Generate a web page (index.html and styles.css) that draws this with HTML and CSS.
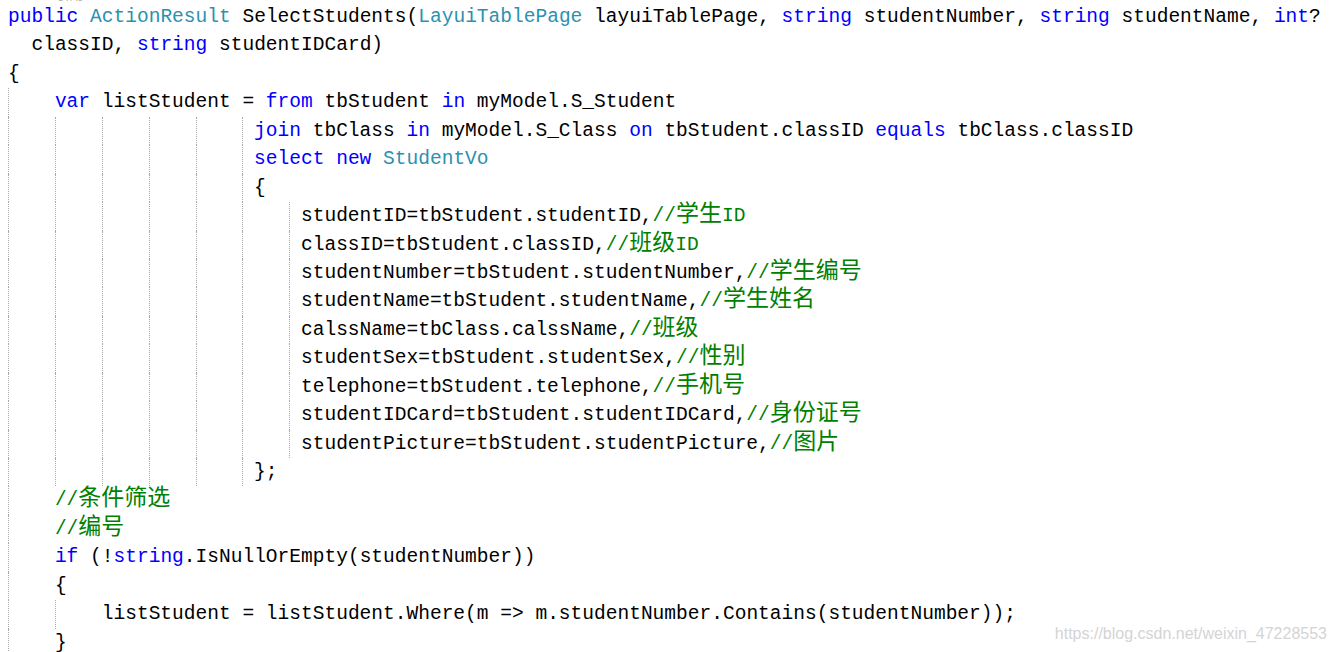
FILE: index.html
```html
<!DOCTYPE html>
<html lang="zh">
<head>
<meta charset="utf-8">
<title>SelectStudents</title>
<link rel="stylesheet" href="styles.css">
</head>
<body>
<div class="editor">
  <div class="lens"><span class="lens-text">0 个引用</span></div>
  <div class="code">
    <div class="line"><span class="kw">public</span> <span class="ty">ActionResult</span> SelectStudents(<span class="ty">LayuiTablePage</span> layuiTablePage, <span class="kw">string</span> studentNumber, <span class="kw">string</span> studentName, <span class="kw">int</span>?</div>
    <div class="line">  classID, <span class="kw">string</span> studentIDCard)</div>
    <div class="line">{</div>
    <div class="line"><span class="g g4"></span><span class="kw">var</span> listStudent = <span class="kw">from</span> tbStudent <span class="kw">in</span> myModel.S_Student</div>
    <div class="line"><span class="g g4"></span><span class="g g4"></span><span class="g g4"></span><span class="g g4"></span><span class="g g4"></span><span class="g g1"></span><span class="kw">join</span> tbClass <span class="kw">in</span> myModel.S_Class <span class="kw">on</span> tbStudent.classID <span class="kw">equals</span> tbClass.classID</div>
    <div class="line"><span class="g g4"></span><span class="g g4"></span><span class="g g4"></span><span class="g g4"></span><span class="g g4"></span><span class="g g1"></span><span class="kw">select</span> <span class="kw">new</span> <span class="ty">StudentVo</span></div>
    <div class="line"><span class="g g4"></span><span class="g g4"></span><span class="g g4"></span><span class="g g4"></span><span class="g g4"></span><span class="g g1"></span>{</div>
    <div class="line"><span class="g g4"></span><span class="g g4"></span><span class="g g4"></span><span class="g g4"></span><span class="g g4"></span><span class="g g4"></span><span class="g g1"></span>studentID=tbStudent.studentID,<span class="cm">//<span class="cn">学生</span>ID</span></div>
    <div class="line"><span class="g g4"></span><span class="g g4"></span><span class="g g4"></span><span class="g g4"></span><span class="g g4"></span><span class="g g4"></span><span class="g g1"></span>classID=tbStudent.classID,<span class="cm">//<span class="cn">班级</span>ID</span></div>
    <div class="line"><span class="g g4"></span><span class="g g4"></span><span class="g g4"></span><span class="g g4"></span><span class="g g4"></span><span class="g g4"></span><span class="g g1"></span>studentNumber=tbStudent.studentNumber,<span class="cm">//<span class="cn">学生编号</span></span></div>
    <div class="line"><span class="g g4"></span><span class="g g4"></span><span class="g g4"></span><span class="g g4"></span><span class="g g4"></span><span class="g g4"></span><span class="g g1"></span>studentName=tbStudent.studentName,<span class="cm">//<span class="cn">学生姓名</span></span></div>
    <div class="line"><span class="g g4"></span><span class="g g4"></span><span class="g g4"></span><span class="g g4"></span><span class="g g4"></span><span class="g g4"></span><span class="g g1"></span>calssName=tbClass.calssName,<span class="cm">//<span class="cn">班级</span></span></div>
    <div class="line"><span class="g g4"></span><span class="g g4"></span><span class="g g4"></span><span class="g g4"></span><span class="g g4"></span><span class="g g4"></span><span class="g g1"></span>studentSex=tbStudent.studentSex,<span class="cm">//<span class="cn">性别</span></span></div>
    <div class="line"><span class="g g4"></span><span class="g g4"></span><span class="g g4"></span><span class="g g4"></span><span class="g g4"></span><span class="g g4"></span><span class="g g1"></span>telephone=tbStudent.telephone,<span class="cm">//<span class="cn">手机号</span></span></div>
    <div class="line"><span class="g g4"></span><span class="g g4"></span><span class="g g4"></span><span class="g g4"></span><span class="g g4"></span><span class="g g4"></span><span class="g g1"></span>studentIDCard=tbStudent.studentIDCard,<span class="cm">//<span class="cn">身份证号</span></span></div>
    <div class="line"><span class="g g4"></span><span class="g g4"></span><span class="g g4"></span><span class="g g4"></span><span class="g g4"></span><span class="g g4"></span><span class="g g1"></span>studentPicture=tbStudent.studentPicture,<span class="cm">//<span class="cn">图片</span></span></div>
    <div class="line"><span class="g g4"></span><span class="g g4"></span><span class="g g4"></span><span class="g g4"></span><span class="g g4"></span><span class="g g1"></span>};</div>
    <div class="line"><span class="g g4"></span><span class="cm">//<span class="cn">条件筛选</span></span></div>
    <div class="line"><span class="g g4"></span><span class="cm">//<span class="cn">编号</span></span></div>
    <div class="line"><span class="g g4"></span><span class="kw">if</span> (!<span class="kw">string</span>.IsNullOrEmpty(studentNumber))</div>
    <div class="line"><span class="g g4"></span>{</div>
    <div class="line"><span class="g g4"></span><span class="g g4"></span>listStudent = listStudent.Where(m =&gt; m.studentNumber.Contains(studentNumber));</div>
    <div class="line"><span class="g g4"></span>}</div>
  </div>
  <div class="watermark">https://blog.csdn.net/weixin_47228553</div>
</div>
</body>
</html>
```
FILE: styles.css
```css
html, body {
  margin: 0;
  padding: 0;
  background: #ffffff;
}

.editor {
  position: relative;
  width: 1338px;
  height: 652px;
  overflow: hidden;
  padding-left: 8px;
  box-sizing: border-box;
}

.lens {
  height: 2px;
  overflow: hidden;
  padding-left: 22px;
}

.lens-text {
  display: block;
  margin-top: -13px;
  font-family: "Liberation Sans", "Noto Sans CJK SC", sans-serif;
  font-size: 14px;
  line-height: 15px;
  color: #b8b8b8;
}

.code {
  padding-top: 1px;
  font-family: "Liberation Mono", "Noto Sans CJK SC", monospace;
  font-size: 19.55px;
  color: #000000;
}

.line {
  height: 28.45px;
  line-height: 28.45px;
  white-space: pre;
  overflow: visible;
}

.g {
  display: inline-block;
  box-sizing: border-box;
  height: 28.45px;
  vertical-align: top;
  border-left: 1px dotted #a8a8a8;
}

.g4 { width: 4ch; }
.g1 { width: 1ch; }

.kw { color: #0000ff; }
.ty { color: #2b91af; }
.cm { color: #008000; }

.cn {
  font-family: "Noto Sans CJK SC", sans-serif;
  font-size: 23px;
  line-height: 18px;
}

.watermark {
  position: absolute;
  right: 11px;
  bottom: 8px;
  font-family: "Liberation Sans", Arial, sans-serif;
  font-size: 16px;
  color: #d4d4d4;
  line-height: 20px;
}
```
